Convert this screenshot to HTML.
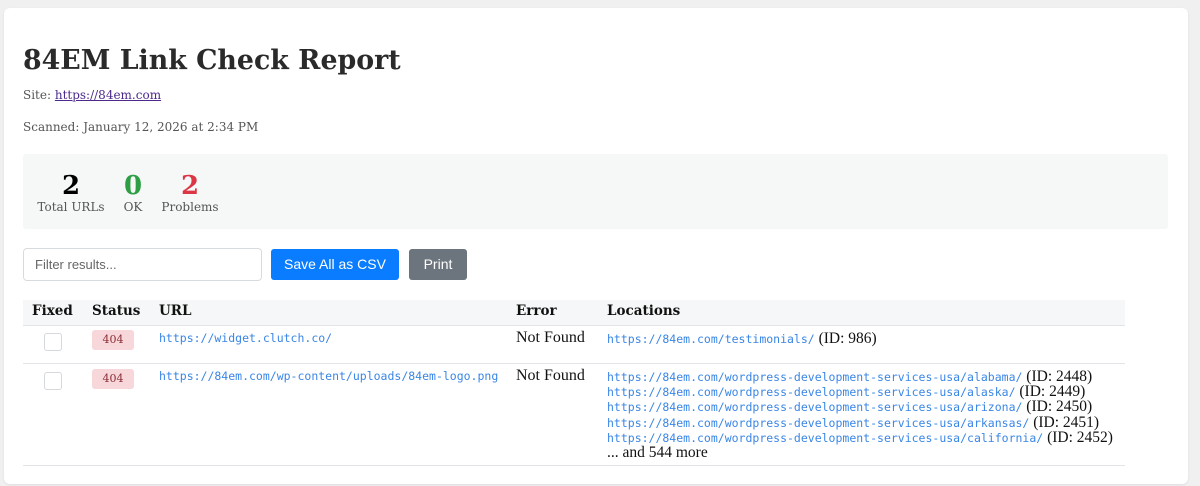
<!DOCTYPE html>
<html><head><style>
*{margin:0;padding:0;box-sizing:border-box}
body{width:1200px;height:486px;background:#f0f0f1;font-family:"DejaVu Serif",serif;position:relative;overflow:hidden;color:#222}
.card{position:absolute;left:4px;top:8px;width:1184px;height:476px;background:#fff;border-radius:6px;box-shadow:0 1px 2px rgba(0,0,0,.08)}
.a{position:absolute;white-space:nowrap}
.mono{font-family:"DejaVu Sans Mono","Liberation Mono",monospace;font-size:11.5px;color:#3a86e6}
.cb{position:absolute;width:18px;height:18px;border:1px solid #d5d8dc;border-radius:3px;background:#fff}
.badge{position:absolute;width:42px;height:20px;background:#f8d7da;color:#8b2e36;border-radius:3px;font-size:11px;text-align:center;line-height:20px}
.th{position:absolute;top:303px;font-weight:bold;font-size:13.5px;color:#111}
.loc{position:absolute;left:607px;font-family:"Liberation Serif",serif;font-size:15.5px;color:#111;white-space:nowrap;line-height:15.2px}
.loc div{height:15.2px;line-height:15.2px}
.nf{font-family:"Liberation Serif",serif;font-size:16px;color:#111}
</style></head><body>
<div class="card"></div>
<div class="a" style="left:23px;top:45px;font-size:26.8px;font-weight:bold;color:#2a2a2a">84EM Link Check Report</div>
<div class="a" style="left:23px;top:88px;font-size:12px;color:#555">Site: <span style="color:#4b2a8c;text-decoration:underline">https://84em.com</span></div>
<div class="a" style="left:23px;top:120px;font-size:12px;color:#555">Scanned: January 12, 2026 at 2:34 PM</div>
<div class="a" style="left:23px;top:154px;width:1145px;height:75px;background:#f6f7f7;border-radius:3px"></div>
<div class="a" style="left:35px;top:170px;width:72px;text-align:center;font-size:26px;font-weight:bold;color:#000;line-height:32px">2</div>
<div class="a" style="left:35px;top:200px;width:72px;text-align:center;font-size:12px;color:#555">Total URLs</div>
<div class="a" style="left:118px;top:170px;width:30px;text-align:center;font-size:26px;font-weight:bold;color:#2e9e45;line-height:32px">0</div>
<div class="a" style="left:118px;top:200px;width:30px;text-align:center;font-size:12px;color:#555">OK</div>
<div class="a" style="left:159px;top:170px;width:62px;text-align:center;font-size:26px;font-weight:bold;color:#dc3545;line-height:32px">2</div>
<div class="a" style="left:159px;top:200px;width:62px;text-align:center;font-size:12px;color:#555">Problems</div>
<div class="a" style="left:23px;top:248px;width:239px;height:33px;border:1px solid #d8dbde;border-radius:4px;font-family:'Liberation Sans',sans-serif;font-size:13px;color:#666;padding:8px 11px">Filter results...</div>
<div class="a" style="left:271px;top:249px;width:128px;height:31px;background:#0a7cff;border-radius:3px;font-family:'Liberation Sans',sans-serif;font-size:14px;color:#fff;text-align:center;line-height:31px">Save All as CSV</div>
<div class="a" style="left:409px;top:249px;width:58px;height:31px;background:#6c757d;border-radius:3px;font-family:'Liberation Sans',sans-serif;font-size:14px;color:#fff;text-align:center;line-height:31px">Print</div>
<div class="a" style="left:23px;top:300px;width:1102px;height:26px;background:#f6f7f8;border-bottom:1px solid #e2e4e7"></div>
<div class="th" style="left:32px">Fixed</div>
<div class="th" style="left:92px">Status</div>
<div class="th" style="left:159px">URL</div>
<div class="th" style="left:516px">Error</div>
<div class="th" style="left:607px">Locations</div>
<div class="a" style="left:23px;top:363px;width:1102px;height:1px;background:#e2e4e7"></div>
<div class="a" style="left:23px;top:465px;width:1102px;height:1px;background:#e2e4e7"></div>
<div class="cb" style="left:44px;top:333px"></div>
<div class="badge" style="left:92px;top:330px">404</div>
<div class="a mono" style="left:159px;top:331px">https://widget.clutch.co/</div>
<div class="a nf" style="left:516px;top:329px">Not Found</div>
<div class="loc" style="top:331px"><div><span class="mono">https://84em.com/testimonials/</span> (ID: 986)</div></div>
<div class="cb" style="left:44px;top:372px"></div>
<div class="badge" style="left:92px;top:369px">404</div>
<div class="a mono" style="left:159px;top:369px">https://84em.com/wp-content/uploads/84em-logo.png</div>
<div class="a nf" style="left:516px;top:367px">Not Found</div>
<div class="loc" style="top:369px"><div><span class="mono">https://84em.com/wordpress-development-services-usa/alabama/</span> (ID: 2448)</div><div><span class="mono">https://84em.com/wordpress-development-services-usa/alaska/</span> (ID: 2449)</div><div><span class="mono">https://84em.com/wordpress-development-services-usa/arizona/</span> (ID: 2450)</div><div><span class="mono">https://84em.com/wordpress-development-services-usa/arkansas/</span> (ID: 2451)</div><div><span class="mono">https://84em.com/wordpress-development-services-usa/california/</span> (ID: 2452)</div><div>... and 544 more</div></div>
</body></html>
